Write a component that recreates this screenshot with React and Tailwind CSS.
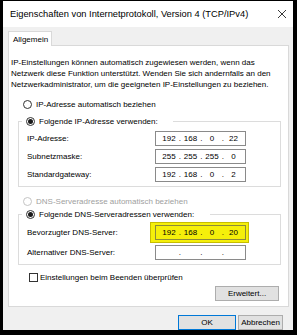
import React from "react";

const font = { fontFamily: '"Liberation Sans", Arial, sans-serif' };

function Radio({ checked, disabled, label }) {
  return (
    <div className={`flex items-center h-[12px] ${disabled ? "text-[#a0a0a0]" : "text-black"}`}>
      <span
        className={`w-[9px] h-[9px] rounded-full border flex items-center justify-center bg-white ${
          disabled ? "border-[#c4c4c4]" : "border-[#333333]"
        }`}
      >
        {checked && <span className="w-[5px] h-[5px] rounded-full bg-[#1a1a1a]" />}
      </span>
      <span className="ml-[4px]">{label}</span>
    </div>
  );
}

function IpBox({ parts, highlight }) {
  return (
    <div
      className={`w-[91px] h-[15px] border flex items-center pl-[5px] ${
        highlight ? "border-[#8c8a3a] bg-transparent" : "border-[#8a8a8a] bg-white"
      }`}
    >
      {[0, 1, 2, 3].map((i) => (
        <React.Fragment key={i}>
          <span className="w-[16px] text-center">{parts ? parts[i] : ""}</span>
          {i < 3 && <span className="w-[5.5px] text-center">.</span>}
        </React.Fragment>
      ))}
    </div>
  );
}

function Row({ label, parts, highlight }) {
  return (
    <div className="flex items-center h-[15px]">
      <span className="w-[128px]">{label}</span>
      {highlight ? (
        <div className="-my-[3px] -ml-[5px] p-[2px] pl-[4px] bg-[#f5ef0a] border border-[#c6bd00]">
          <IpBox parts={parts} highlight />
        </div>
      ) : (
        <IpBox parts={parts} />
      )}
    </div>
  );
}

export default function App() {
  return (
    <div className="w-[297px] h-[335px] bg-black pt-[1px] pl-[3px] text-[8px] leading-[11px]" style={font}>
      <div className="w-[290px] h-[329px] bg-[#f0f0f0] flex flex-col">
        <div className="h-[26px] bg-white flex items-center justify-between pl-[7px] pr-[4px] text-[9.3px] text-black">
          <span>Eigenschaften von Internetprotokoll, Version 4 (TCP/IPv4)</span>
          <svg width="10" height="10" viewBox="0 0 10 10" className="mr-[2px]">
            <path d="M1 1 L9 9 M9 1 L1 9" stroke="#222" strokeWidth="0.9" />
          </svg>
        </div>
        <div className="pl-[5px] pt-[4px] flex flex-col">
          <div className="w-[44px] h-[15px] bg-white border border-b-0 border-[#d9d9d9] -mb-px relative z-10 flex items-center pl-[4px]">
            Allgemein
          </div>
          <div className="w-[281px] h-[262px] bg-white border border-[#d9d9d9] flex flex-col pt-[11px]">
            <div className="pl-[2px]">
              IP-Einstellungen können automatisch zugewiesen werden, wenn das
              <br />
              Netzwerk diese Funktion unterstützt. Wenden Sie sich andernfalls an den
              <br />
              Netzwerkadministrator, um die geeigneten IP-Einstellungen zu beziehen.
            </div>
            <div className="mt-[8px] ml-[14px]">
              <Radio label="IP-Adresse automatisch beziehen" />
            </div>
            <fieldset className="mt-[5px] ml-[9px] w-[263px] border border-[#dcdcdc] pl-[8px] pb-[4px]">
              <legend className="w-[151px] pl-[4px] ml-[-5px] bg-white">
                <Radio checked label="Folgende IP-Adresse verwenden:" />
              </legend>
              <div className="mt-[4px] flex flex-col gap-[3px]">
                <Row label="IP-Adresse:" parts={["192", "168", "0", "22"]} />
                <Row label="Subnetzmaske:" parts={["255", "255", "255", "0"]} />
                <Row label="Standardgateway:" parts={["192", "168", "0", "2"]} />
              </div>
            </fieldset>
            <div className="mt-[8px] ml-[14px]">
              <Radio disabled label="DNS-Serveradresse automatisch beziehen" />
            </div>
            <fieldset className="mt-[1px] ml-[9px] w-[263px] border border-[#dcdcdc] pl-[8px] pb-[4px]">
              <legend className="w-[188px] pl-[4px] ml-[-5px] bg-white">
                <Radio checked label="Folgende DNS-Serveradressen verwenden:" />
              </legend>
              <div className="mt-[5px] flex flex-col gap-[5px]">
                <Row label="Bevorzugter DNS-Server:" parts={["192", "168", "0", "20"]} highlight />
                <Row label="Alternativer DNS-Server:" />
              </div>
            </fieldset>
            <div className="mt-[6px] ml-[20px] flex items-center h-[12px]">
              <span className="w-[9px] h-[9px] border border-[#333333] bg-white" />
              <span className="ml-[2px]">Einstellungen beim Beenden überprüfen</span>
            </div>
            <div className="mt-[3px] flex justify-end pr-[9px]">
              <button className="w-[64px] h-[15px] bg-[#e1e1e1] border border-[#adadad] flex items-center justify-center">
                Erweitert...
              </button>
            </div>
          </div>
          <div className="mt-[8px] flex justify-end gap-[2px] pr-[10px]">
            <button className="w-[58px] h-[15px] bg-[#e1e1e1] border border-[#0078d7] flex items-center justify-center">
              OK
            </button>
            <button className="w-[45px] h-[15px] bg-[#e1e1e1] border border-[#adadad] flex items-center justify-center">
              Abbrechen
            </button>
          </div>
        </div>
      </div>
    </div>
  );
}
